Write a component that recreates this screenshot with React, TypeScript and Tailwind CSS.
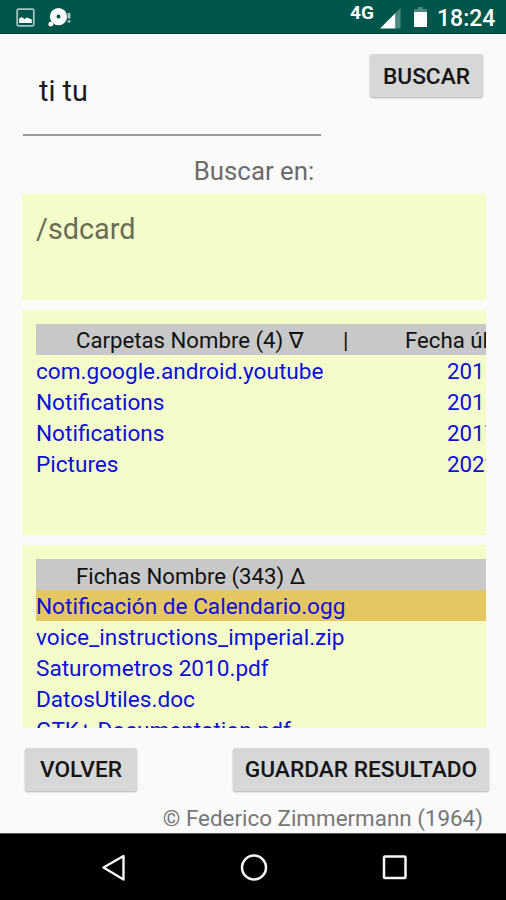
import type { ReactNode } from "react";

const folders = [
  { name: "com.google.android.youtube", date: "201" },
  { name: "Notifications", date: "201" },
  { name: "Notifications", date: "2017" },
  { name: "Pictures", date: "2022" },
];

const files = [
  "Notificación de Calendario.ogg",
  "voice_instructions_imperial.zip",
  "Saturometros 2010.pdf",
  "DatosUtiles.doc",
  "GTK+ Documentation.pdf",
];

function StatusBar() {
  return (
    <header className="flex h-[34px] shrink-0 items-start border-b border-[#003f37] bg-[#00564b] text-white">
      <svg className="ml-4 mt-2 h-[19px] w-[19px]" viewBox="0 0 19 19">
        <rect x="1.2" y="1.2" width="16.6" height="16.6" rx="1.2" fill="none" stroke="#a3c5bf" strokeWidth="1.8" />
        <path d="M3.200 15V10.800L5.500 9l3 2 2.500-1.500 4.800 2V15z" fill="white" />
      </svg>
      <svg className="ml-3 mt-[7px] h-5 w-6" viewBox="0 0 24 20">
        <path fillRule="evenodd" d="M11.5 1a8.6 8.6 0 1 1 0 17.2A8.6 8.6 0 0 1 11.5 1zM11.5 7.5a2 2 0 1 0 0 4 2 2 0 0 0 0-4z" fill="white" />
        <circle cx="3.8" cy="17.2" r="2.4" fill="white" />
        <path d="M22 6v5.5M22 13.200v2.300" stroke="#b3cfca" strokeWidth="2.600" />
      </svg>
      <span className="ml-auto mt-px w-[24px] text-[19px] leading-6 font-bold">4G</span>
      <svg className="ml-[6px] mt-2 h-[21px] w-[21px]" viewBox="0 0 21 21">
        <path d="M0 20.500L15.500 5V20.500z" fill="white" />
        <path d="M15.500 5L20.500 0V20.500H15.500z" fill="#4d8981" />
      </svg>
      <svg className="ml-3 mt-[6px] h-[21px] w-[15px]" viewBox="0 0 15 21">
        <path d="M1 3h4V1h5v2h4v3H1z" fill="#4d8981" />
        <path d="M1 6h13v15H1z" fill="white" />
      </svg>
      <span className="mr-[11px] ml-[9px] mt-[5px] w-[58px] whitespace-nowrap text-[23px] leading-7 font-medium">18:24</span>
    </header>
  );
}

function Button({ className, children }: { className: string; children: ReactNode }) {
  return (
    <button
      className={`flex h-[43px] shrink-0 items-center justify-center rounded-[3px] bg-[#d6d7d7] text-[22.7px] font-medium whitespace-nowrap text-[#151515] shadow-[0_1px_2px_rgba(0,0,0,0.3)] ${className}`}
    >
      {children}
    </button>
  );
}

export default function App() {
  return (
    <div className="flex h-[900px] w-[506px] flex-col overflow-hidden bg-[#fafafa] font-['Roboto','DejaVu_Sans',sans-serif]">
      <StatusBar />
      <main className="flex h-[799px] shrink-0 flex-col">
        <div className="flex h-[102px] shrink-0 items-start justify-between pr-[23px] pl-[23px]">
          <div className="h-[102px] w-[298px] border-b-2 border-[#9c9c9c] pt-[41px] pl-4 text-[28.8px] leading-8 text-[#1c1c1c]">ti tu</div>
          <Button className="mt-5 w-[113px] pt-[3px]">BUSCAR</Button>
        </div>
        <div className="h-[58px] shrink-0 pt-5 pl-[2px] text-center text-[25.8px] leading-[30px] text-[#6b6b6b]">Buscar en:</div>

        <section className="ml-[22px] h-[106px] w-[464px] shrink-0 bg-[#f4fdc9] pt-5 pl-[14px] text-[28.8px] leading-[30px] text-[#696d57]">/sdcard</section>

        <section className="mt-[10px] ml-[22px] h-[225px] w-[464px] shrink-0 overflow-hidden bg-[#f4fdc9] pt-[14px] pl-[14px] text-[22.6px] leading-[31px] whitespace-nowrap text-[#0d0de0]">
          <div className="flex h-[31px] bg-[#c8c8c8] pt-px text-[22.2px] text-[#111]">
            <span className="w-[268px] shrink-0 pl-10">Carpetas Nombre (4) ∇</span>
            <span className="w-[39px] shrink-0 pl-[39px]">|</span>
            <span className="ml-[62px] shrink-0">Fecha última</span>
          </div>
          {folders.map((f, i) => (
            <div key={i} className="flex h-[31px] pt-px">
              <span className="w-[411px] shrink-0">{f.name}</span>
              <span className="shrink-0 text-[22.3px]">{f.date}</span>
            </div>
          ))}
        </section>

        <section className="mt-[10px] ml-[22px] h-[183px] w-[464px] shrink-0 overflow-hidden bg-[#f4fdc9] pt-[14px] pl-[14px] text-[22.6px] leading-[31px] whitespace-nowrap text-[#0d0de0]">
          <div className="h-[31px] bg-[#c8c8c8] pt-[2px] pl-10 text-[22.2px] text-[#111]">Fichas Nombre (343) Δ</div>
          {files.map((name, i) => (
            <div key={name} className={i === 0 ? "h-[31px] bg-[#e5c761] pt-px" : "h-[31px] pt-px"}>
              {name}
            </div>
          ))}
        </section>

        <div className="mt-5 flex h-[43px] shrink-0 justify-between pr-[17px] pl-[25px]">
          <Button className="w-[112px] pt-px">VOLVER</Button>
          <Button className="w-[256px] pt-px">GUARDAR RESULTADO</Button>
        </div>
        <footer className="mt-3 pr-[23px] text-right text-[22.4px] leading-[30px] text-[#777]">© Federico Zimmermann (1964)</footer>
      </main>
      <nav className="flex h-[67px] shrink-0 items-start border-t border-[#555] bg-black pt-5">
        <svg className="ml-[101px] h-7 w-[26px]" viewBox="0 0 26 28" fill="none" stroke="#f5f5f5" strokeWidth="2.4" strokeLinejoin="round">
          <path d="M2.500 13.500L22.500 2V25.500z" />
        </svg>
        <svg className="ml-[113px] h-7 w-7" viewBox="0 0 28 28" fill="none" stroke="#f5f5f5" strokeWidth="2.5">
          <circle cx="14" cy="13.500" r="12" />
        </svg>
        <svg className="ml-[113px] h-7 w-7" viewBox="0 0 28 28" fill="none" stroke="#f5f5f5" strokeWidth="2.5">
          <rect x="3" y="2.500" width="21.500" height="21.500" rx="1" />
        </svg>
      </nav>
    </div>
  );
}
